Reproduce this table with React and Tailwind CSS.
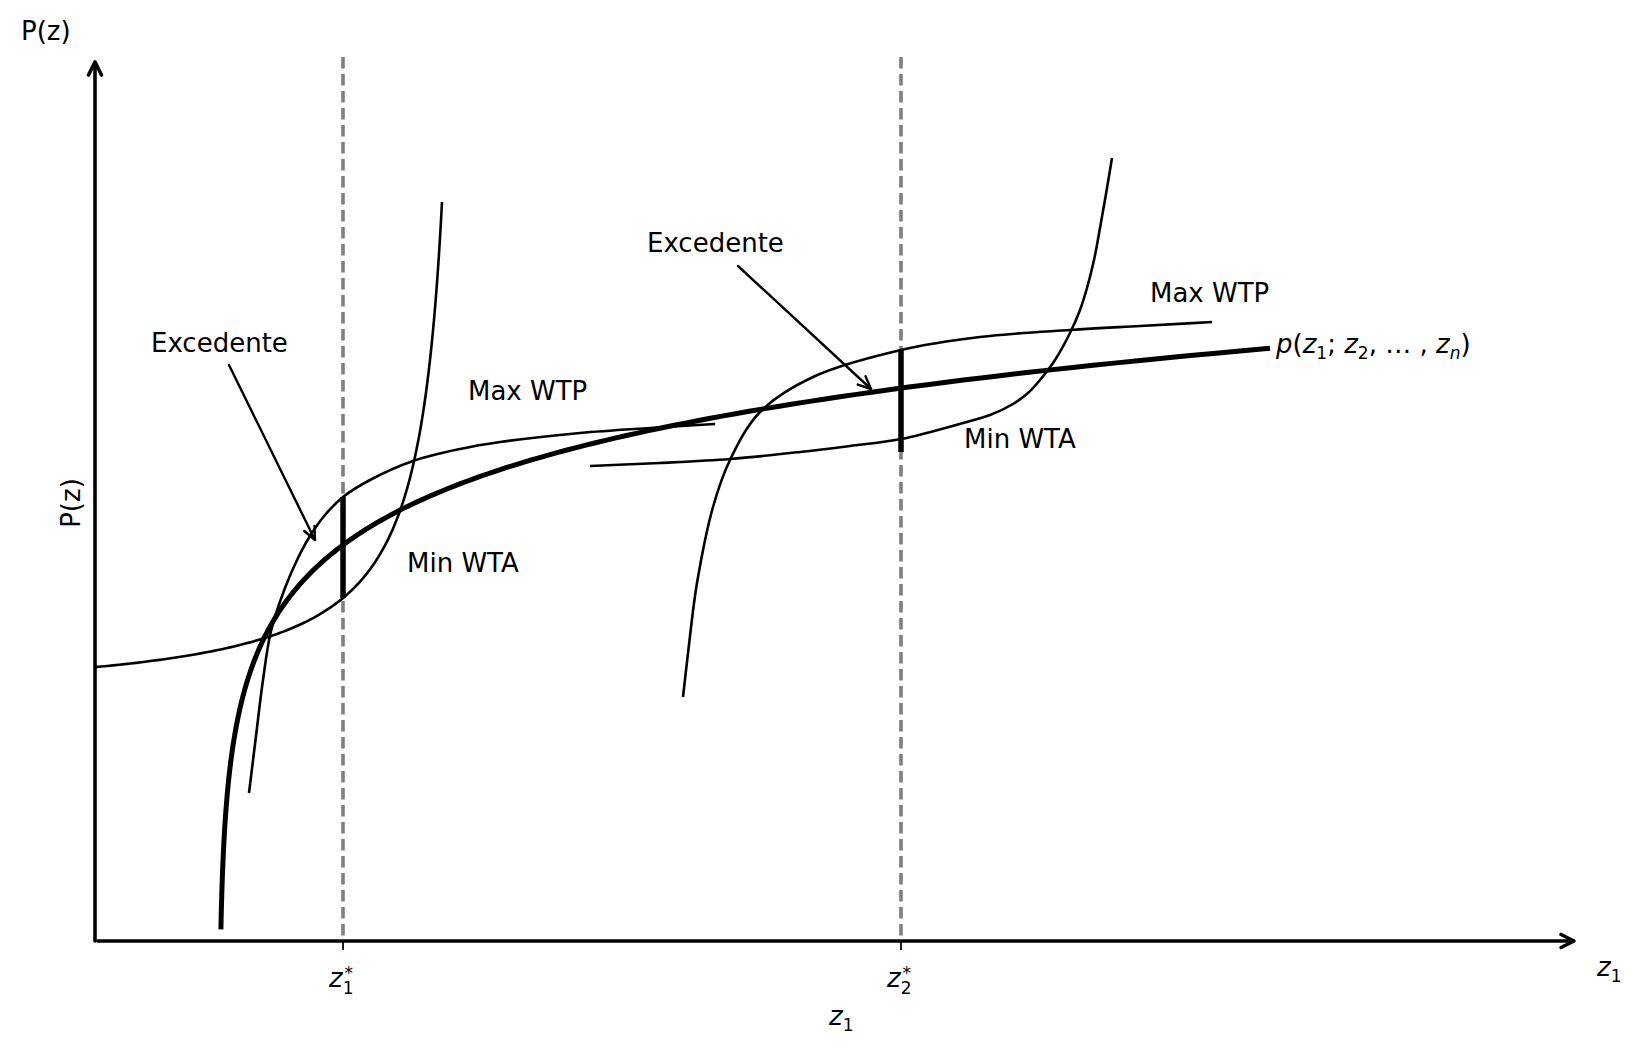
import React from 'react';

// bid / offer curves, read off the reference (page pixels)
const MAX_WTP_1 = [[249,793],[256,736],[263,680],[271,631],[285,588],[298,558],[310,536],[325,515],[343,497],[370,480],[413,461],[460,449],[500,442],[580,433],[650,428],[715,424]];
const MAX_WTP_2 = [[683,697],[690,636],[697,583],[713,507],[730,460],[760,412],[813,377],[901,350],[980,337],[1070,330],[1140,326],[1212,322]];
const MIN_WTA_2 = [[590,466],[660,463],[730,459],[800,452],[850,446],[901,439],[963,423],[990,415],[1013,404],[1028,393],[1040,380],[1055,360],[1070,333],[1080,310],[1087,288],[1094,260],[1100,228],[1106,194],[1112,158]];

// first offer curve follows a hyperbola closely
const minWta1 = () => {
  const pts = [];
  const u0 = Math.log(468 - 95);
  const u1 = Math.log(26);
  for (let i = 0; i <= 160; i++) {
    const u = Math.exp(u0 + ((u1 - u0) * i) / 160);
    pts.push(`${(468 - u).toFixed(2)},${(702 - 13000 / u).toFixed(2)}`);
  }
  return 'M' + pts.join(' L');
};

const dist = (a, b) => Math.hypot(a[0] - b[0], a[1] - b[1]);

// centripetal catmull-rom -> cubic beziers
const smooth = (pts) => {
  const n = pts.length;
  const P = [
    [2 * pts[0][0] - pts[1][0], 2 * pts[0][1] - pts[1][1]],
    ...pts,
    [2 * pts[n - 1][0] - pts[n - 2][0], 2 * pts[n - 1][1] - pts[n - 2][1]],
  ];
  let d = `M${pts[0][0]},${pts[0][1]}`;
  for (let i = 1; i < P.length - 2; i++) {
    const p0 = P[i - 1], p1 = P[i], p2 = P[i + 1], p3 = P[i + 2];
    const a1 = Math.sqrt(dist(p0, p1)) || 1e-6;
    const a2 = Math.sqrt(dist(p1, p2)) || 1e-6;
    const a3 = Math.sqrt(dist(p2, p3)) || 1e-6;
    const c1 = [0, 1].map(
      (k) => (a1 * a1 * p2[k] - a2 * a2 * p0[k] + (2 * a1 * a1 + 3 * a1 * a2 + a2 * a2) * p1[k]) / (3 * a1 * (a1 + a2))
    );
    const c2 = [0, 1].map(
      (k) => (a3 * a3 * p1[k] - a2 * a2 * p3[k] + (2 * a3 * a3 + 3 * a3 * a2 + a2 * a2) * p2[k]) / (3 * a3 * (a3 + a2))
    );
    d += ` C${c1[0].toFixed(2)},${c1[1].toFixed(2)} ${c2[0].toFixed(2)},${c2[1].toFixed(2)} ${p2[0]},${p2[1]}`;
  }
  return d;
};

// hedonic price function, log shaped
const priceCurve = () => {
  const pts = [];
  const t0 = Math.log(1.9);
  const t1 = Math.log(1270 - 219);
  for (let i = 0; i <= 240; i++) {
    const t = t0 + ((t1 - t0) * i) / 240;
    const z = 219 + Math.exp(t);
    const y = 545 - 92 * (t - 4.82);
    pts.push(`${z.toFixed(2)},${y.toFixed(2)}`);
  }
  return 'M' + pts.join(' L');
};

const Annotation = ({ from, to }) => {
  const a = Math.atan2(to[1] - from[1], to[0] - from[0]);
  const len = 14;
  const spread = 0.42;
  const arm = (s) => [to[0] - len * Math.cos(a + s), to[1] - len * Math.sin(a + s)];
  const l = arm(spread);
  const r = arm(-spread);
  return (
    <g stroke="black" strokeWidth="2.4" fill="none" strokeLinecap="round" strokeLinejoin="round">
      <line x1={from[0]} y1={from[1]} x2={to[0]} y2={to[1]} />
      <polyline points={`${l[0]},${l[1]} ${to[0]},${to[1]} ${r[0]},${r[1]}`} />
    </g>
  );
};

const StarLabel = ({ x, sub }) => (
  <text x={x - 14} y="987" fontSize="26">
    <tspan fontStyle="italic">z</tspan>
    <tspan fontSize="17" dy="7">{sub}</tspan>
    <tspan fontSize="17" dx="-9" dy="-15">*</tspan>
  </text>
);

export default function App() {
  return (
    <div className="w-[1640px] h-[1052px] bg-white overflow-hidden">
      <svg
        width="1640"
        height="1052"
        viewBox="0 0 1640 1052"
        className="block"
        style={{ fontFamily: '"DejaVu Sans", "Liberation Sans", sans-serif' }}
      >
        {/* dashed guides at z1* and z2* */}
        <g stroke="#7f7f7f" strokeWidth="3.6" strokeDasharray="11.5 5.5">
          <line x1="343" y1="57" x2="343" y2="941" />
          <line x1="901" y1="57" x2="901" y2="941" />
        </g>

        {/* axes */}
        <g stroke="black" strokeWidth="3.6" fill="none" strokeLinecap="round" strokeLinejoin="round">
          <line x1="95" y1="941" x2="95" y2="63" />
          <polyline points="88.5,75 95,62 101.5,75" />
          <line x1="98" y1="941" x2="1573" y2="941" />
          <polyline points="1561,934.5 1574,941 1561,947.5" />
        </g>
        <g stroke="black" strokeWidth="1.8">
          <line x1="343" y1="941" x2="343" y2="950" />
          <line x1="901" y1="941" x2="901" y2="950" />
        </g>

        {/* offer and bid curves */}
        <g stroke="black" strokeWidth="2.6" fill="none">
          <path d={minWta1()} />
          <path d={smooth(MAX_WTP_1)} />
          <path d={smooth(MIN_WTA_2)} />
          <path d={smooth(MAX_WTP_2)} />
        </g>

        {/* price function */}
        <path d={priceCurve()} stroke="black" strokeWidth="5" fill="none" />

        {/* surplus segments */}
        <g stroke="black" strokeWidth="5.5">
          <line x1="343" y1="497" x2="343" y2="598" />
          <line x1="901" y1="349" x2="901" y2="452" />
        </g>

        <Annotation from={[229, 365]} to={[315, 540]} />
        <Annotation from={[738, 266]} to={[871, 389]} />

        <g fontSize="26" fill="black">
          <text x="21" y="39.5">P(z)</text>
          <text transform="translate(80,503) rotate(-90)" textAnchor="middle">P(z)</text>

          <text x="151" y="352">Excedente</text>
          <text x="647" y="252">Excedente</text>
          <text x="468" y="400">Max WTP</text>
          <text x="407" y="572">Min WTA</text>
          <text x="1150" y="302">Max WTP</text>
          <text x="964" y="448">Min WTA</text>

          <text x="1276" y="353">
            <tspan fontStyle="italic">p</tspan>
            <tspan>(</tspan>
            <tspan fontStyle="italic">z</tspan>
            <tspan fontSize="17" dy="6">1</tspan>
            <tspan dy="-6">; </tspan>
            <tspan fontStyle="italic">z</tspan>
            <tspan fontSize="17" dy="6">2</tspan>
            <tspan dy="-6">, … ,</tspan>
            <tspan fontStyle="italic"> z</tspan>
            <tspan fontSize="17" fontStyle="italic" dy="6">n</tspan>
            <tspan dy="-6">)</tspan>
          </text>

          <text x="1597" y="976">
            <tspan fontStyle="italic">z</tspan>
            <tspan fontSize="17" dy="6">1</tspan>
          </text>

          <text x="829" y="1025">
            <tspan fontStyle="italic">z</tspan>
            <tspan fontSize="17" dy="6">1</tspan>
          </text>
        </g>

        <StarLabel x={343} sub="1" />
        <StarLabel x={901} sub="2" />
      </svg>
    </div>
  );
}
